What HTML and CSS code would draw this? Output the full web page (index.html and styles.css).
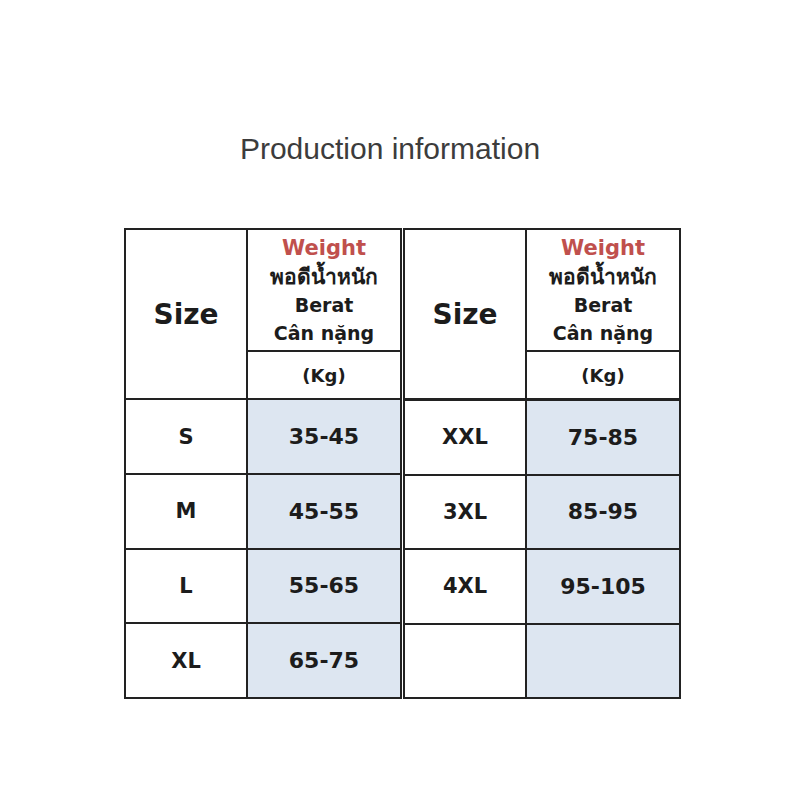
FILE: index.html
```html
<!doctype html>
<html lang="en">
<head>
  <meta charset="utf-8">
  <title>Production information</title>
  <link rel="stylesheet" href="styles.css">
</head>
<body class="page">
  <h1 class="title">Production information</h1>

  <div class="charts">
    <table class="chart">
      <tr class="head">
        <td class="size-head" rowspan="2">Size</td>
        <td class="weight-head">
          <div class="weight-en">Weight</div>
          <div class="weight-th">พอดีน้ำหนัก</div>
          <div>Berat</div>
          <div>Cân nặng</div>
        </td>
      </tr>
      <tr class="unit-row">
        <td class="unit">(Kg)</td>
      </tr>
      <tr><td class="size">S</td><td class="value">35-45</td></tr>
      <tr><td class="size">M</td><td class="value">45-55</td></tr>
      <tr><td class="size">L</td><td class="value">55-65</td></tr>
      <tr><td class="size">XL</td><td class="value">65-75</td></tr>
    </table>

    <table class="chart chart-right">
      <tr class="head">
        <td class="size-head" rowspan="2">Size</td>
        <td class="weight-head">
          <div class="weight-en">Weight</div>
          <div class="weight-th">พอดีน้ำหนัก</div>
          <div>Berat</div>
          <div>Cân nặng</div>
        </td>
      </tr>
      <tr class="unit-row">
        <td class="unit">(Kg)</td>
      </tr>
      <tr class="first-row"><td class="size">XXL</td><td class="value">75-85</td></tr>
      <tr><td class="size">3XL</td><td class="value">85-95</td></tr>
      <tr><td class="size">4XL</td><td class="value">95-105</td></tr>
      <tr><td class="size"></td><td class="value"></td></tr>
    </table>
  </div>
</body>
</html>
```

FILE: styles.css
```css
.page {
  margin: 0;
  background: #ffffff;
  font-family: 'DejaVu Sans', 'Noto Sans', sans-serif;
  color: #1c1c1c;
}

.title {
  margin: 0;
  padding-top: 132px;
  height: 96px;
  box-sizing: content-box;
  text-align: center;
  padding-right: 20px;

  font-family: 'Liberation Sans', Arial, sans-serif;
  font-size: 30px;
  font-weight: normal;
  color: #3c3c3c;
}

.charts {
  display: flex;
  gap: 1px;
  padding-left: 124px;
}

.chart {
  border-collapse: collapse;
  table-layout: fixed;
  width: 278px;
}

.chart td {
  border: 2px solid #222222;
  padding: 0;
  text-align: center;
  font-weight: bold;
}

.size-head {
  width: 120px;
  height: 168px;
  font-size: 28px;
}

.weight-head {
  height: 120px;
  font-size: 19px;
  line-height: 28px;
  vertical-align: middle;
}

.weight-en {
  color: #c0504d;
  font-size: 21px;
  line-height: 30px;
}

.weight-th {
  font-size: 21px;
}

.unit {
  height: 46px;
  font-size: 18px;
}

.size {
  height: 72.5px;
  font-size: 21px;
}

.value {
  background: #dde6f1;
  font-size: 22px;
}

.chart-right .first-row td {
  border-top-width: 3px;
}
```
